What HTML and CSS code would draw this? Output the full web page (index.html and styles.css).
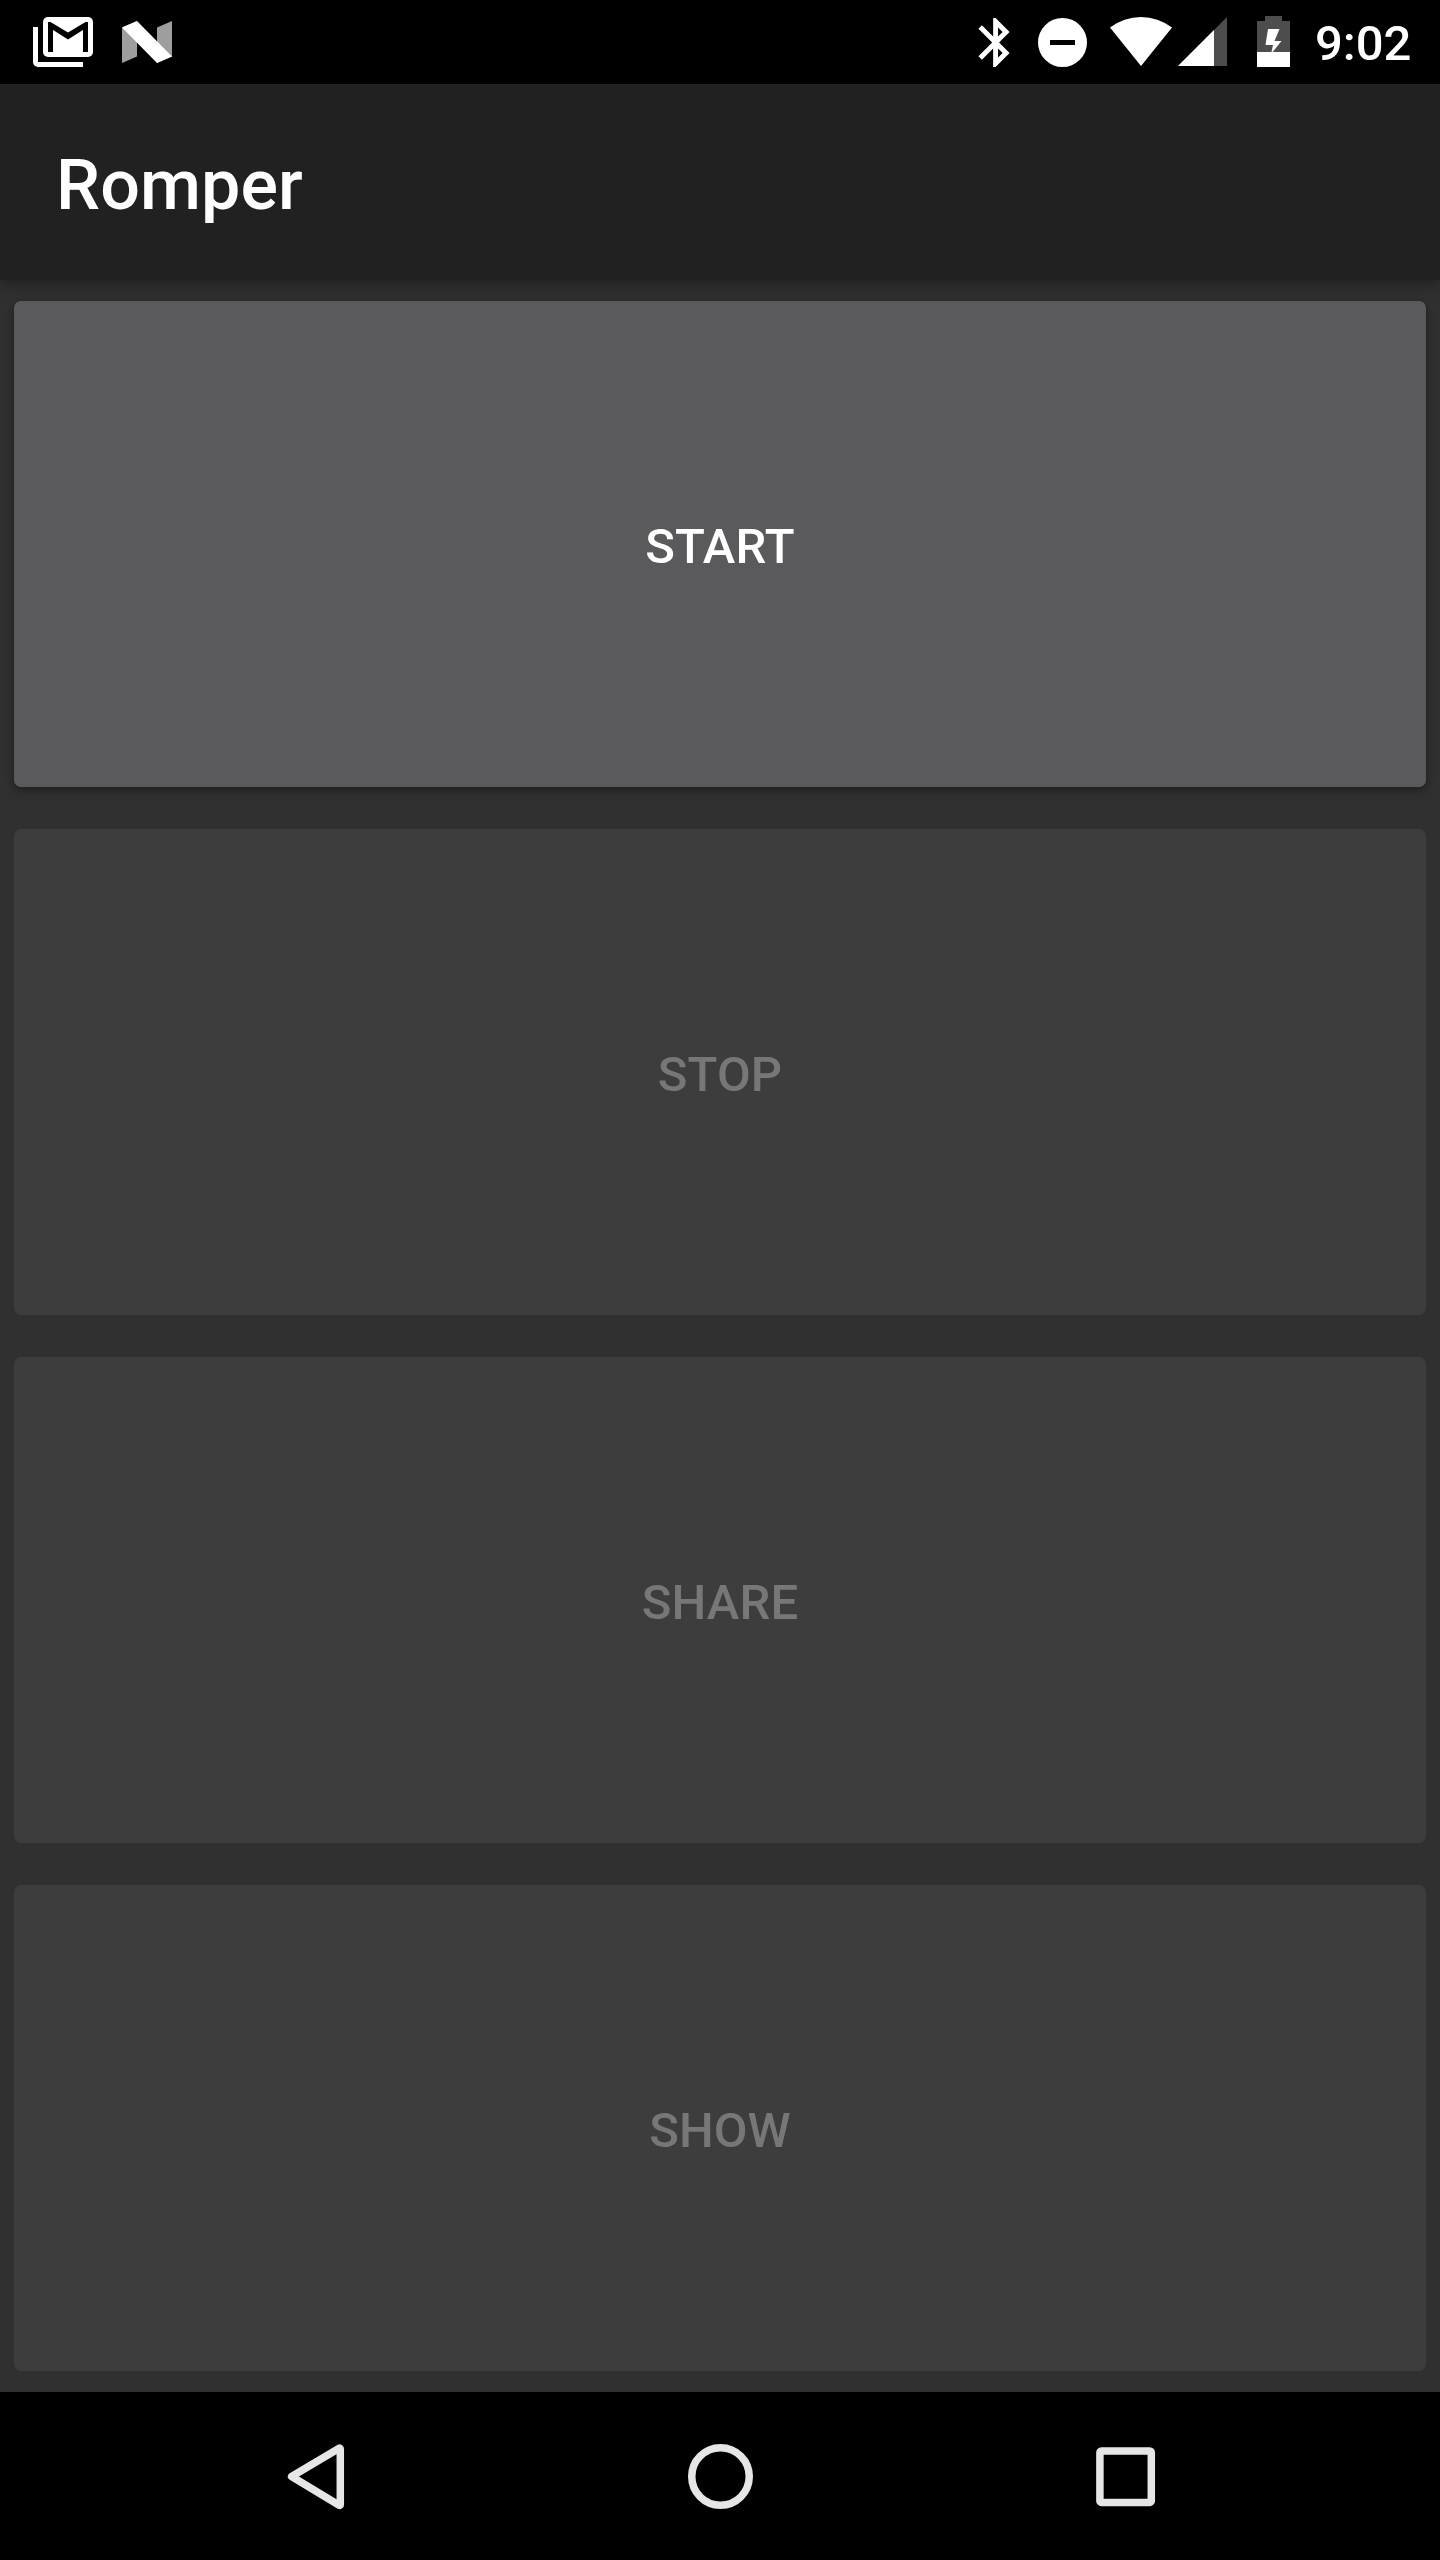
FILE: index.html
```html
<!DOCTYPE html>
<html lang="en">
<head>
<meta charset="utf-8">
<title>Romper</title>
<link rel="stylesheet" href="styles.css">
</head>
<body>
<div class="screen">
  <header class="status-bar">
    <svg class="notifications" width="144" height="84" viewBox="30 0 144 84" aria-hidden="true">
      <rect x="43" y="17" width="50" height="40" rx="5" fill="#fff"/>
      <path fill="#000" d="M48 22h2.500L68 32.500 85.500 22H88v30h-5V30L68 39.500 53 30v22h-5z"/>
      <path fill="#fff" d="M33 27h5v35h45v5H38a5 5 0 0 1-5-5z"/>
      <path fill="#9e9e9e" d="M122 27.500l15-6.500v35.500l-15 6.500zM157 27.500l15-6.500v35.500l-15 6.500z"/>
      <path fill="#fff" d="M122 27.500l15-6.500 35 35.500-15 6.500z"/>
    </svg>
    <svg class="system-icons" width="320" height="84" viewBox="975 0 320 84" aria-hidden="true">
      <path fill="#fff" transform="translate(966.200 13.100) scale(2.450)" d="M17.710 7.710L12 2h-1v7.590L6.410 5 5 6.410 10.590 12 5 17.590 6.410 19 11 14.410V22h1l5.710-5.710-4.300-4.290 4.300-4.290zM13 5.830l1.880 1.880L13 9.590V5.830zm1.880 10.460L13 18.170v-3.760l1.880 1.880z"/>
      <circle cx="1062.500" cy="42.500" r="24.500" fill="#fff"/>
      <path fill="#000" d="M1050 40h25v5h-25z"/>
      <path fill="#fff" d="M1141 66l-31-38.500a51 51 0 0 1 62 0z"/>
      <path fill="#4d4d4d" d="M1178 66l49-49v49z"/>
      <path fill="#fff" d="M1178 66l36-36v36z"/>
      <path fill="#4d4d4d" d="M1265 16h17v5h8v31h-33V21h8z"/>
      <path fill="#fff" d="M1257 52h33v15h-33z"/>
      <path fill="#fff" d="M1268 29h11.500l-5 12h7l-10.500 13 2-9h-7.500z"/>
    </svg>
    <time class="clock">9:02</time>
  </header>
  <div class="app-bar"><h1 class="title">Romper</h1></div>
  <main class="actions">
    <button class="action">START</button>
    <button class="action" disabled>STOP</button>
    <button class="action" disabled>SHARE</button>
    <button class="action" disabled>SHOW</button>
  </main>
  <nav class="nav-bar">
    <svg class="nav-icon" viewBox="275 2436 81 81" aria-label="Back"><path d="M291.600 2476.500L339.200 2448.200a.8.8 0 0 1 1.100.8v55.500a.8.8 0 0 1-1.100.8z"/></svg>
    <svg class="nav-icon" viewBox="680 2436 81 81" aria-label="Home"><circle cx="720.500" cy="2476.500" r="28.750"/></svg>
    <svg class="nav-icon" viewBox="1085 2436 81 81" aria-label="Overview"><rect x="1099.900" y="2451" width="51.400" height="51.400" rx="1.500"/></svg>
  </nav>
</div>
</body>
</html>
```
FILE: styles.css
```css
* {
  box-sizing: border-box;
}

body {
  margin: 0;
  font-family: Roboto, sans-serif;
  color: #fff;
  background: #000;
}

.screen {
  display: flex;
  flex-direction: column;
  width: 1440px;
  height: 2560px;
  background: #303030;
}

.status-bar {
  display: flex;
  align-items: center;
  height: 84px;
  padding: 0 28px 0 30px;
  background: #000;
}

.system-icons {
  margin-left: auto;
}

.clock {
  width: 117px;
  padding-left: 20px;
  font-size: 49px;
  font-weight: 500;
  line-height: 58px;
  padding-top: 3px;
  white-space: nowrap;
}

.app-bar {
  display: flex;
  align-items: center;
  height: 196px;
  padding: 6px 56px 0;
  background: #212121;
  box-shadow: 0 4px 14px rgba(0, 0, 0, .35);
}

.title {
  margin: 0;
  font-size: 70px;
  font-weight: 500;
  line-height: 82px;
  letter-spacing: .1px;
}

.actions {
  display: flex;
  flex: 1;
  flex-direction: column;
  gap: 42px;
  padding: 21px 14px;
}

.action {
  flex: 1;
  padding: 5px 0 0;
  border: 0;
  border-radius: 7px;
  background: #5a5a5c;
  box-shadow: 0 3px 8px rgba(0, 0, 0, .4);
  color: #fff;
  font: 500 49px/58px Roboto, sans-serif;
  letter-spacing: .1px;
}

.action:disabled {
  background: #3d3d3d;
  box-shadow: none;
  color: #777;
}

.nav-bar {
  display: flex;
  align-items: center;
  justify-content: space-between;
  height: 168px;
  padding: 1px 274px 0 275px;
  background: #000;
}

.nav-icon {
  width: 81px;
  height: 81px;
  fill: none;
  stroke: #e6e6e6;
  stroke-width: 7.5px;
  stroke-linejoin: round;
}
```
